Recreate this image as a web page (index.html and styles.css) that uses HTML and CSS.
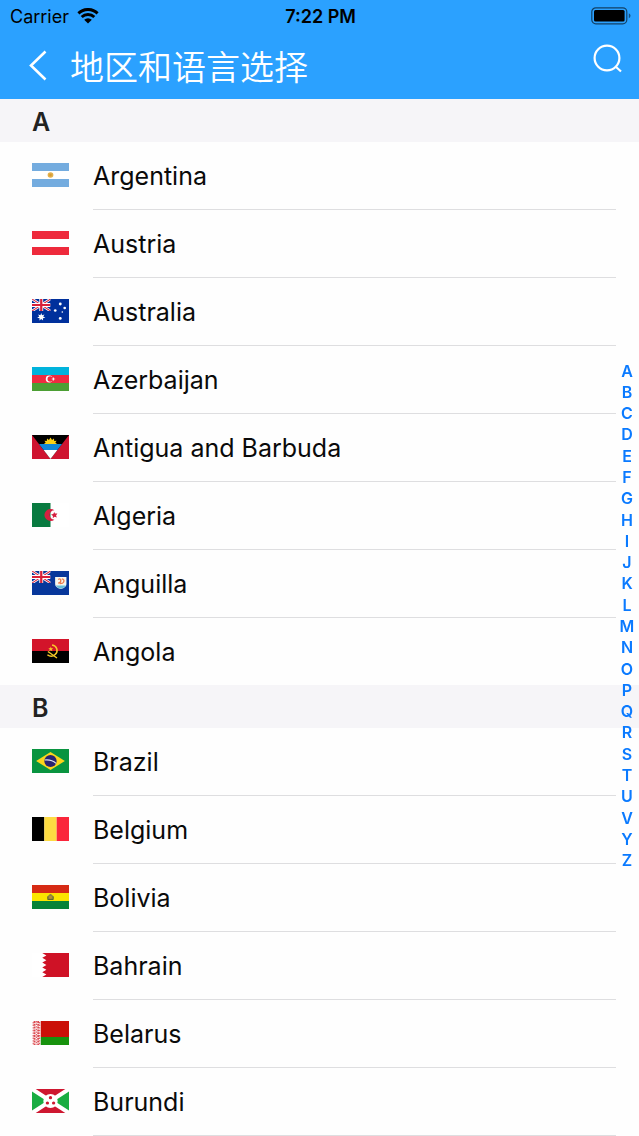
FILE: index.html
```html
<!DOCTYPE html>
<html lang="zh-CN">
<head>
<meta charset="utf-8">
<meta name="viewport" content="width=device-width, initial-scale=1">
<title>地区和语言选择</title>
<link rel="stylesheet" href="styles.css">
</head>
<body>
<header class="top">
  <div class="status">
    <div class="carrier">
      <span>Carrier</span>
      <svg class="wifi" viewBox="0 0 22 16" aria-hidden="true">
        <path d="M1.400 5.400a13.600 13.600 0 0 1 19.200 0M4.700 9a9 9 0 0 1 12.600 0" fill="none" stroke="#000" stroke-width="2.900"/>
        <path d="M11 15.600 7.200 11.800a5.500 5.500 0 0 1 7.600 0z"/>
      </svg>
    </div>
    <time class="clock">7:22 PM</time>
    <svg class="battery" viewBox="0 0 40 18" aria-label="Battery full" role="img">
      <rect x=".8" y=".8" width="35" height="16" rx="4" fill="none" stroke="#000" stroke-opacity=".6" stroke-width="1.200"/>
      <rect x="3" y="3" width="30.600" height="11.600" rx="1.500"/>
      <path d="M37.800 6.200v5q1.700-.7 1.700-2.500t-1.700-2.500z" opacity=".5"/>
    </svg>
  </div>
  <div class="bar">
    <button class="icon-button" type="button" aria-label="返回">
      <svg class="back" viewBox="0 0 20 32" aria-hidden="true"><path d="M17.500 1.500 3 15.500l14.500 14" fill="none" stroke="#fff" stroke-width="2.600"/></svg>
    </button>
    <h1 class="title">地区和语言选择</h1>
    <button class="icon-button search" type="button" aria-label="搜索">
      <svg class="glass" viewBox="0 0 30 30" aria-hidden="true"><g fill="none" stroke="#fff" stroke-width="2.200"><circle cx="14" cy="14" r="12.400"/><path d="m22.500 22.500 5.500 5"/></g></svg>
    </button>
  </div>
</header>

<main>
  <section id="A">
    <h2 class="letter">A</h2>
    <ul class="list">
      <li class="item"><button class="row" type="button">
        <svg class="flag" viewBox="0 0 36 24" preserveAspectRatio="none" aria-hidden="true"><path fill="#fff" d="M0 0h36v24H0z"/><path fill="#74acdf" d="M0 0h36v8H0zM0 16h36v8H0z"/><circle cx="18" cy="12" r="2.800" fill="#e2b04c"/><circle cx="18" cy="12" r="1.200" fill="#d79a33"/></svg>
        <span class="name">Argentina</span></button></li>
      <li class="item"><button class="row" type="button">
        <svg class="flag" viewBox="0 0 36 24" preserveAspectRatio="none" aria-hidden="true"><path fill="#fff" d="M0 0h36v24H0z"/><path fill="#ee2a3c" d="M0 0h36v8H0zM0 16h36v8H0z"/></svg>
        <span class="name">Austria</span></button></li>
      <li class="item"><button class="row" type="button">
        <svg class="flag" viewBox="0 0 36 24" preserveAspectRatio="none" aria-hidden="true">
          <defs><g id="canton"><path d="m0 0 18 12M18 0 0 12" stroke="#fff" stroke-width="2.600"/><path d="m0 0 18 12M18 0 0 12" stroke="#d8203a" stroke-width="1"/><path d="M9 0v12M0 6h18" stroke="#fff" stroke-width="3.800"/><path d="M9 0v12M0 6h18" stroke="#d8203a" stroke-width="2.200"/></g></defs>
          <path fill="#00309c" d="M0 0h36v24H0z"/><svg width="18" height="12"><use href="#canton"/></svg>
          <g fill="#fff"><path d="m9 14 .8 2.200 2.300-.7-1.200 2.100 2.100 1.200-2.400.4.200 2.400-1.800-1.600-1.800 1.600.2-2.400-2.400-.4 2.100-1.200-1.200-2.100 2.300.7z"/><circle cx="27.500" cy="5" r="1.400"/><circle cx="22.600" cy="11.500" r="1.300"/><circle cx="31.800" cy="9" r="1.300"/><circle cx="29.500" cy="13" r=".8"/><circle cx="27.500" cy="19.400" r="1.400"/></g>
        </svg>
        <span class="name">Australia</span></button></li>
      <li class="item"><button class="row" type="button">
        <svg class="flag" viewBox="0 0 36 24" preserveAspectRatio="none" aria-hidden="true"><path fill="#00b3dc" d="M0 0h36v8H0z"/><path fill="#ef2b40" d="M0 8h36v8H0z"/><path fill="#4c9f34" d="M0 16h36v8H0z"/><circle cx="16.800" cy="12" r="3.400" fill="#fff"/><circle cx="17.800" cy="12" r="2.700" fill="#ef2b40"/><path fill="#fff" d="m20.800 9.900.6 1.500 1.500.6-1.500.6-.6 1.500-.6-1.500-1.500-.6 1.500-.6z"/></svg>
        <span class="name">Azerbaijan</span></button></li>
      <li class="item"><button class="row" type="button">
        <svg class="flag" viewBox="0 0 36 24" preserveAspectRatio="none" aria-hidden="true"><path fill="#cf1430" d="M0 0h36v24H0z"/><path d="M0 0h36L18 24z"/><path fill="#fcd116" d="m11.500 9 1.800-1.300-1.200-2 2.300.3.200-2.500 1.900 1.500L18 2.500 19.500 5l1.900-1.500.2 2.500 2.300-.3-1.200 2L24.500 9z"/><path fill="#1187d8" d="M6.800 9h22.400l-4.500 6H11.300z"/><path fill="#fff" d="M11.300 15h13.400L18 24z"/></svg>
        <span class="name">Antigua and Barbuda</span></button></li>
      <li class="item"><button class="row" type="button">
        <svg class="flag" viewBox="0 0 36 24" preserveAspectRatio="none" aria-hidden="true"><path fill="#fff" d="M0 0h36v24H0z"/><path fill="#087a40" d="M0 0h18v24H0z"/><path fill="#d52140" d="M21.800 7.300a6 6 0 1 0 0 9.400 4.700 4.700 0 1 1 0-9.400zM21.600 8.900l-.9 2.100-2.200.6 1.900 1.300-.2 2.300 1.800-1.400 2.200.7-.8-2.100 1.300-1.900-2.300.1z"/></svg>
        <span class="name">Algeria</span></button></li>
      <li class="item"><button class="row" type="button">
        <svg class="flag" viewBox="0 0 36 24" preserveAspectRatio="none" aria-hidden="true"><path fill="#07379b" d="M0 0h36v24H0z"/><svg width="18" height="12"><use href="#canton"/></svg><path fill="#f7f7ed" d="M22.500 6h11v7q0 3.500-5.500 5-5.500-1.500-5.500-5z"/><path fill="#65bdda" d="M23 14.500h10q-1 2.300-5 3.300-4-1-5-3.300z"/><path d="M25.500 8.500q2.500-1.500 2.500 1t-2.500 2.500M29 7.800q3 .6 1.700 3.400-.7 1.400-3.700 1.300" fill="none" stroke="#ef7b4a" stroke-width="1.300"/></svg>
        <span class="name">Anguilla</span></button></li>
      <li class="item"><button class="row" type="button">
        <svg class="flag" viewBox="0 0 36 24" preserveAspectRatio="none" aria-hidden="true"><path d="M0 0h36v24H0z"/><path fill="#d3142a" d="M0 0h36v12H0z"/><g fill="none" stroke="#f7c928"><path d="M19.500 6c5 .8 6.400 6.300 3 9.500-2.500 2.300-5.600 1.800-7.500.2" stroke-width="1.500"/><path d="m15.500 12.500 8.800 6.500" stroke-width="1.400"/></g><path fill="#f7c928" d="m18.300 7.500.6 1.700 1.800.1-1.400 1.100.5 1.800-1.500-1-1.600 1 .5-1.800-1.300-1.100 1.800-.1z"/></svg>
        <span class="name">Angola</span></button></li>
    </ul>
  </section>

  <section id="B">
    <h2 class="letter">B</h2>
    <ul class="list list-open">
      <li class="item"><button class="row" type="button">
        <svg class="flag" viewBox="0 0 36 24" preserveAspectRatio="none" aria-hidden="true"><path fill="#099440" d="M0 0h36v24H0z"/><path fill="#fcd51c" d="M4 12 18 3l14 9-14 9z"/><circle cx="18" cy="12" r="6" fill="#2b2371"/><path d="M12.400 11q6.500-.8 11 3.300" fill="none" stroke="#e2e5ef" stroke-width="1.100"/></svg>
        <span class="name">Brazil</span></button></li>
      <li class="item"><button class="row" type="button">
        <svg class="flag" viewBox="0 0 36 24" preserveAspectRatio="none" aria-hidden="true"><path d="M0 0h12v24H0z"/><path fill="#fddb42" d="M12 0h12v24H12z"/><path fill="#fa263b" d="M24 0h12v24H24z"/></svg>
        <span class="name">Belgium</span></button></li>
      <li class="item"><button class="row" type="button">
        <svg class="flag" viewBox="0 0 36 24" preserveAspectRatio="none" aria-hidden="true"><path fill="#d62a14" d="M0 0h36v8H0z"/><path fill="#fbe500" d="M0 8h36v8H0z"/><path fill="#078338" d="M0 16h36v8H0z"/><path fill="#8a8540" d="M15 11.500 17.500 9h1l2.500 2.500-.5 3.500h-5z"/><circle cx="18" cy="12.300" r="1.500" fill="#b78d35"/><path d="M15.300 11.500v3h5.400v-3" fill="none" stroke="#596329" stroke-width=".8"/></svg>
        <span class="name">Bolivia</span></button></li>
      <li class="item"><button class="row" type="button">
        <svg class="flag" viewBox="0 0 36 24" preserveAspectRatio="none" aria-hidden="true"><path fill="#fff" d="M0 0h36v24H0z"/><path fill="#cf1226" d="M36 0H10l4 2.400-4 2.400 4 2.400-4 2.400 4 2.400-4 2.400 4 2.400-4 2.400 4 2.400L10 24h26z"/></svg>
        <span class="name">Bahrain</span></button></li>
      <li class="item"><button class="row" type="button">
        <svg class="flag" viewBox="0 0 36 24" preserveAspectRatio="none" aria-hidden="true"><path fill="#fff" d="M0 0h36v24H0z"/><path fill="#cb1008" d="M8.500 0H36v16H8.500z"/><path fill="#17920d" d="M8.500 16H36v8H8.500z"/><path d="M2.500 0v24M6 0v24" stroke="#db4a50" stroke-width="1.800" stroke-dasharray="2 .8"/><path d="M1.200 1v23M4.300 0v24M7.400 1v23" stroke="#df6468" stroke-width="1.200" stroke-dasharray="1.400 1.200"/></svg>
        <span class="name">Belarus</span></button></li>
      <li class="item"><button class="row" type="button">
        <svg class="flag" viewBox="0 0 36 24" preserveAspectRatio="none" aria-hidden="true"><path fill="#ce1730" d="M0 0h36v24H0z"/><path fill="#19ad42" d="m0 0 18 12L0 24zM36 0 18 12l18 12z"/><path d="m0 0 36 24M36 0 0 24" stroke="#fff" stroke-width="4"/><circle cx="18" cy="12" r="7" fill="#fff"/><g fill="#ce1730"><circle cx="18" cy="8.700" r="1.600"/><circle cx="15" cy="14" r="1.600"/><circle cx="21" cy="14" r="1.600"/></g></svg>
        <span class="name">Burundi</span></button></li>
    </ul>
  </section>
</main>

<nav class="index" aria-label="索引">
  <ol class="index-list">
    <li><a href="#A">A</a></li><li><a href="#B">B</a></li><li><a href="#C">C</a></li><li><a href="#D">D</a></li>
    <li><a href="#E">E</a></li><li><a href="#F">F</a></li><li><a href="#G">G</a></li><li><a href="#H">H</a></li>
    <li><a href="#I">I</a></li><li><a href="#J">J</a></li><li><a href="#K">K</a></li><li><a href="#L">L</a></li>
    <li><a href="#M">M</a></li><li><a href="#N">N</a></li><li><a href="#O">O</a></li><li><a href="#P">P</a></li>
    <li><a href="#Q">Q</a></li><li><a href="#R">R</a></li><li><a href="#S">S</a></li><li><a href="#T">T</a></li>
    <li><a href="#U">U</a></li><li><a href="#V">V</a></li><li><a href="#Y">Y</a></li><li><a href="#Z">Z</a></li>
  </ol>
</nav>
</body>
</html>
```
FILE: styles.css
```css
* {
  box-sizing: border-box;
}

body {
  margin: 0;
  background: #fefefe;
  color: #0a0a0a;
  font-family: Inter, "Noto Sans CJK SC", sans-serif;
}

button {
  border: 0;
  padding: 0;
  background: none;
  color: inherit;
  font: inherit;
  cursor: pointer;
}

svg {
  display: block;
  flex: none;
}

.top {
  position: sticky;
  top: 0;
  z-index: 1;
  background: #2ba1ff;
}

.status {
  display: grid;
  grid-template-columns: 1fr auto 1fr;
  align-items: center;
  height: 32px;
  padding: 0 8px 0 10px;
  color: #000;
  font-size: 18px;
}

.carrier {
  display: flex;
  align-items: center;
  gap: 8px;
}

.wifi {
  width: 22px;
  height: 16px;
}

.clock {
  font-weight: 600;
}

.battery {
  width: 40px;
  height: 18px;
  justify-self: end;
}

.bar {
  display: flex;
  align-items: center;
  height: 67px;
  padding: 0 16px 0 28px;
}

.icon-button {
  display: flex;
  align-items: center;
}

.back {
  width: 20px;
  height: 32px;
}

.title {
  flex: 1;
  margin: 0 0 0 22px;
  color: #fff;
  font-family: "Noto Sans CJK SC", sans-serif;
  font-size: 34px;
  font-weight: 350;
  line-height: 48px;
}

.search {
  align-self: flex-start;
  padding-top: 12px;
}

.glass {
  width: 30px;
  height: 30px;
}

.letter {
  margin: 0;
  padding: 4px 0 0 32px;
  background: #f6f5f8;
  color: #222;
  font-size: 25px;
  font-weight: 600;
  line-height: 39px;
}

.list {
  margin: 0;
  padding: 0 23px 0 32px;
  list-style: none;
}

.item {
  position: relative;
}

.row {
  display: flex;
  align-items: center;
  gap: 24px;
  width: 100%;
  height: 67px;
  padding-bottom: 1px;
  text-align: left;
}

.item:not(:last-child),
.list-open .item {
  padding-bottom: 1px;
}

.item:not(:last-child)::after,
.list-open .item::after {
  content: "";
  position: absolute;
  right: 0;
  bottom: 0;
  left: 61px;
  height: 1px;
  background: #dedee0;
}

.flag {
  width: 37px;
  height: 24px;
}

.name {
  padding-top: 2px;
  font-size: 25px;
  line-height: 32px;
}

.index {
  position: fixed;
  top: 96px;
  right: 0;
  bottom: 0;
  z-index: 1;
  display: flex;
  align-items: center;
  width: 24px;
}

.index-list {
  display: grid;
  grid-auto-rows: 1fr;
  width: 100%;
  height: 511px;
  margin: 0;
  padding: 0;
  list-style: none;
  text-align: center;
}

.index-list a {
  display: block;
  color: #0a7aff;
  font-size: 16px;
  font-weight: 600;
  line-height: 21px;
  text-decoration: none;
}
```
